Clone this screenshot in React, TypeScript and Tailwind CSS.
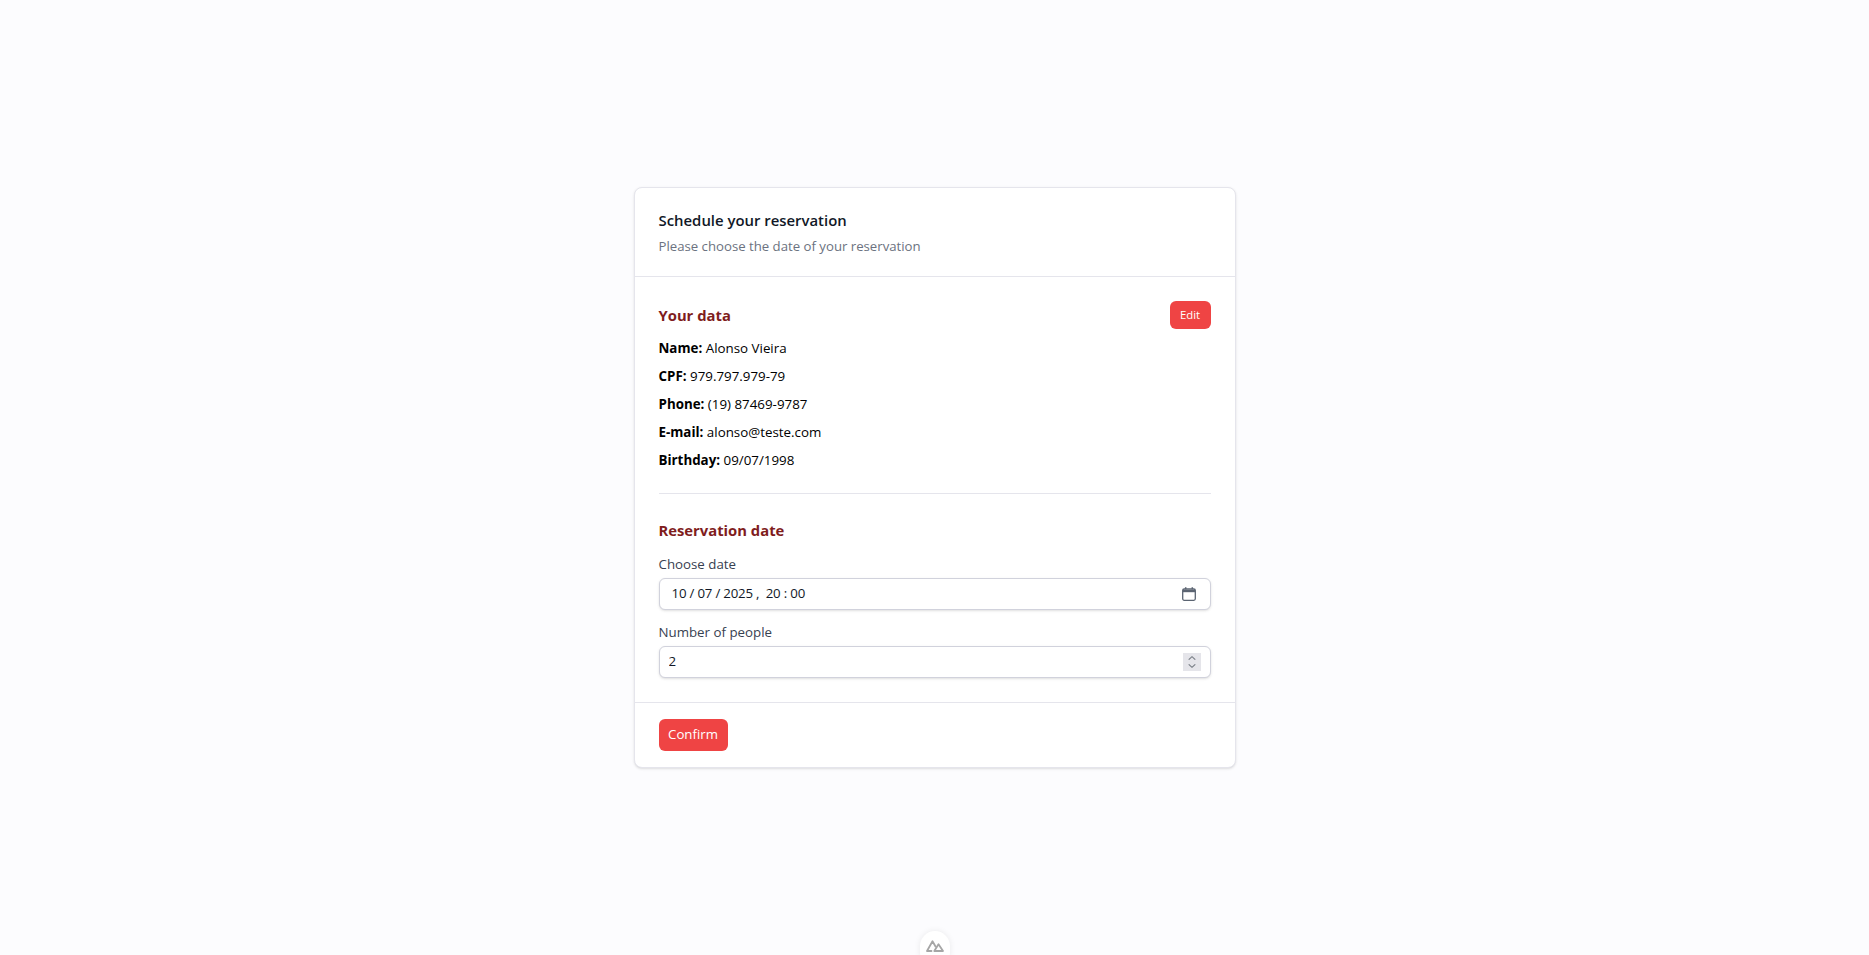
const fontStack = { fontFamily: '"Open Sans", "Noto Sans", sans-serif' }

const DataLine = ({ label, value }: { label: string; value: string }) => (
  <p className="text-[13.35px] leading-5 text-black">
    <strong className="font-bold">{label}:</strong> {value}
  </p>
)

const NuxtLogo = () => (
  <svg viewBox="0 0 18 12" className="w-[18px] h-[12px]" fill="none" stroke="#a6a6a6" strokeWidth="1.8" strokeLinejoin="round" strokeLinecap="round">
    <path d="M5.5 11H1L6.5 1.2l3 5.3" />
    <path d="M12.5 4.3 17 11H8.3l4.2-6.7Z" />
  </svg>
)

export default function App() {
  return (
    <div className="relative min-h-screen flex items-center justify-center bg-[#fcfcfe] overflow-hidden" style={fontStack}>
      <div className="w-[602px] bg-white rounded-lg border border-[#e5e5ec] shadow-sm divide-y divide-[#e5e5ec]">
        <div className="px-6 py-5">
          <h2 className="text-[14.9px] font-semibold leading-6 text-[#111827]">Schedule your reservation</h2>
          <p className="mt-1 text-[13.2px] leading-5 text-[#6b7280]">Please choose the date of your reservation</p>
        </div>

        <div className="px-6 py-6">
          <div className="flex items-start justify-between">
            <h3 className="mt-[2px] text-[14.8px] font-bold leading-6 text-[#7f1d1d]">Your data</h3>
            <button className="h-7 w-[41px] rounded-md bg-[#ef4444] text-[11.4px] font-medium text-white">Edit</button>
          </div>
          <div className="mt-[9px] flex flex-col gap-2">
            <DataLine label="Name" value="Alonso Vieira" />
            <DataLine label="CPF" value="979.797.979-79" />
            <DataLine label="Phone" value="(19) 87469-9787" />
            <DataLine label="E-mail" value="alonso@teste.com" />
            <DataLine label="Birthday" value="09/07/1998" />
          </div>

          <hr className="mt-[23px] mb-6 border-[#e5e5ec]" />

          <h3 className="text-[14.8px] font-bold leading-6 text-[#7f1d1d]">Reservation date</h3>
          <label className="mt-3 block text-[13.3px] leading-5 text-[#374151]">Choose date</label>
          <div className="mt-1 flex items-center justify-between h-8 rounded-md border border-[#d1d2dc] bg-white pl-3 pr-[14px] text-[13.25px] tracking-[-0.2px] text-[#111827] shadow-sm whitespace-pre">
            <span>10 / 07 / 2025 ,  20 : 00</span>
            <svg viewBox="0 0 14 14" className="w-[14px] h-[14px]" fill="none" stroke="#5b6472" strokeWidth="1.3">
              <rect x="0.7" y="2" width="12.6" height="11.3" rx="1.5" />
              <path d="M0.7 4h12.6" strokeWidth="2.4" />
              <path d="M3.7 0.3v2M10.3 0.3v2" strokeWidth="1.5" />
            </svg>
          </div>
          <label className="mt-3 block text-[13.3px] leading-5 text-[#374151]">Number of people</label>
          <div className="mt-1 flex items-center h-8 rounded-md border border-[#d1d2dc] bg-white pl-[9px] pr-[9px] shadow-sm">
            <input
              type="number"
              defaultValue={2}
              className="flex-1 min-w-0 bg-transparent text-[13.25px] text-[#111827] outline-none [appearance:textfield] [&::-webkit-inner-spin-button]:appearance-none"
            />
            <div className="flex flex-col items-center justify-center gap-[4px] w-[18px] h-[18px] bg-[#e5e5ea]">
              <svg viewBox="0 0 8 4" className="w-[8px] h-[4px]" fill="none" stroke="#7b8088" strokeWidth="1.1">
                <path d="M0.7 3.7 4 0.7l3.3 3" />
              </svg>
              <svg viewBox="0 0 8 4" className="w-[8px] h-[4px]" fill="none" stroke="#7b8088" strokeWidth="1.1">
                <path d="M0.7 0.3 4 3.3l3.3-3" />
              </svg>
            </div>
          </div>
        </div>

        <div className="px-6 py-4">
          <button className="h-8 w-[69px] rounded-md bg-[#ef4444] text-[13.25px] font-medium text-white">Confirm</button>
        </div>
      </div>

      <div className="absolute bottom-[-12px] left-1/2 -translate-x-1/2 w-[30px] h-[36px] pt-[9px] flex justify-center rounded-full bg-white shadow-[0_0_6px_rgba(0,0,0,0.08)]">
        <NuxtLogo />
      </div>
    </div>
  )
}
